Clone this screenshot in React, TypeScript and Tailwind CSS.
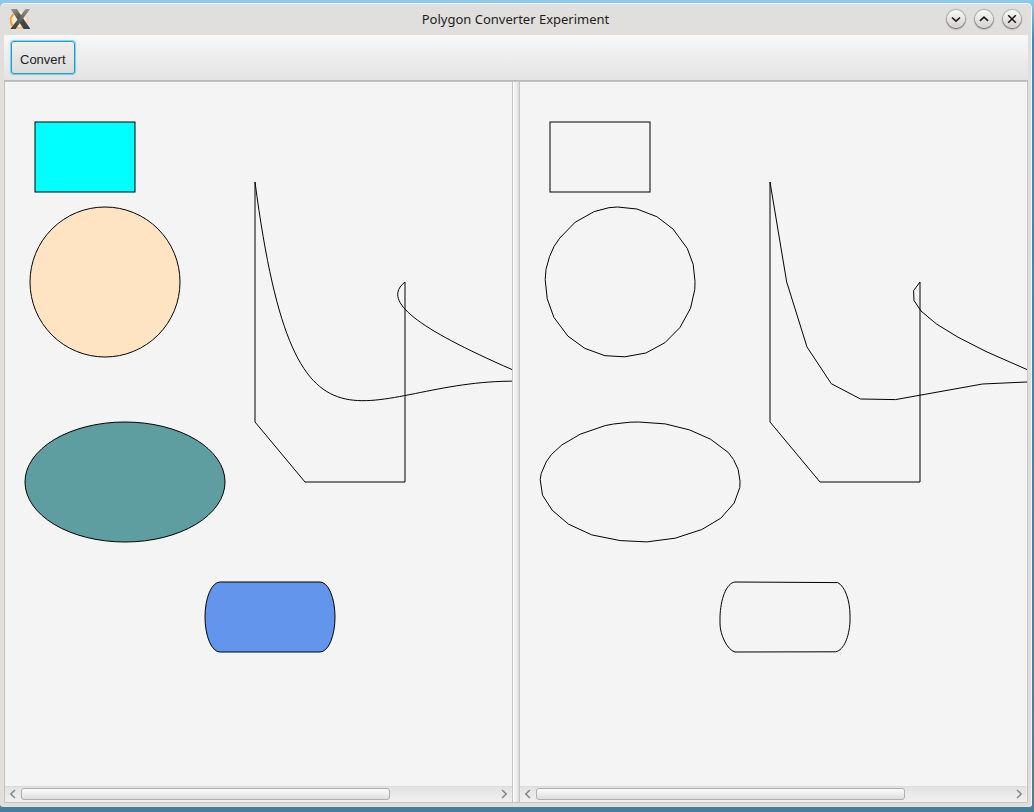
import type { ReactNode } from "react";

function AppLogo() {
  return (
    <svg width="22" height="24" viewBox="0 0 22 24" aria-hidden="true">
      <defs>
        <linearGradient id="logo-dark" x1="0" y1="0" x2="1" y2="1">
          <stop offset="0" stopColor="#a3a29f" />
          <stop offset="0.45" stopColor="#4c4b4a" />
          <stop offset="1" stopColor="#3c3b38" />
        </linearGradient>
        <linearGradient id="logo-light" x1="1" y1="0" x2="0" y2="1">
          <stop offset="0" stopColor="#9b9a96" />
          <stop offset="0.5" stopColor="#64635e" />
          <stop offset="1" stopColor="#3c3a1c" />
        </linearGradient>
      </defs>
      <ellipse cx="9" cy="13" rx="7.6" ry="7.6" fill="#fdeedb" stroke="#fbdcb4" strokeWidth="1.4" />
      <path d="M2.6 18.6 C-0.4 15 -0.2 10.5 3.4 7.2" fill="none" stroke="#f39a3e" strokeWidth="2" />
      <path d="M5 6 C7 4.6 10.5 4.6 12.5 5.4" fill="none" stroke="#fdebc4" strokeWidth="1.4" />
      <path d="M6.5 20.4 C9 21.6 12 21.2 14 20.2" fill="none" stroke="#f6bc66" strokeWidth="1.3" />
      <path d="M17 9.4 C18.2 12 17.8 15 16.8 17" fill="none" stroke="#f7cfa5" strokeWidth="1.1" />
      <path d="M0.6 2 L6.8 2 L20.4 22 L13.6 22 Z" fill="url(#logo-dark)" />
      <path d="M15.6 2 L20 2 L5.6 22 L0.4 22 Z" fill="url(#logo-light)" />
    </svg>
  );
}

function TitleButton({ label, children }: { label: string; children: ReactNode }) {
  return (
    <button
      type="button"
      aria-label={label}
      className="flex size-[18px] items-center justify-center rounded-full bg-linear-to-b from-[#fafafa] to-[#d3d1cf] shadow-[0_1px_2px_rgba(0,0,0,0.5),0_0_1px_1px_rgba(90,90,90,0.35)]"
    >
      <svg width="18" height="18" viewBox="0 0 18 18" fill="none" stroke="#1b1b1b" strokeWidth="1.6">
        {children}
      </svg>
    </button>
  );
}

function ScrollBar({ label }: { label: string }) {
  return (
    <div
      role="group"
      aria-label={label}
      className="flex h-4 shrink-0 items-center border-t border-[#dcdcdc] bg-linear-to-b from-[#e3e3e3] to-[#f0f0f0] pb-0.5"
    >
      <button type="button" aria-label="Scroll left" className="flex w-4 shrink-0 justify-center">
        <svg width="8" height="10" viewBox="0 0 8 10" fill="none" stroke="#858585" strokeWidth="1.5">
          <path d="M6 1 L1.8 5 L6 9" />
        </svg>
      </button>
      <div className="min-w-0 flex-1">
        <div className="h-3 w-[77.7%] rounded-[3px] border border-[#aeaeae] bg-linear-to-b from-[#fdfdfd] to-[#dedede]" />
      </div>
      <button type="button" aria-label="Scroll right" className="flex w-4 shrink-0 justify-center">
        <svg width="8" height="10" viewBox="0 0 8 10" fill="none" stroke="#858585" strokeWidth="1.5">
          <path d="M2 1 L6.2 5 L2 9" />
        </svg>
      </button>
    </div>
  );
}

function Pane({ label, children }: { label: string; children: ReactNode }) {
  return (
    <section aria-label={label} className="flex min-w-0 flex-1 flex-col bg-[#f4f4f4]">
      <div className="min-h-0 flex-1 overflow-hidden">
        <svg width="654" height="700" viewBox="0 0 654 700" fill="none" stroke="#000" strokeWidth="1">
          {children}
        </svg>
      </div>
      <ScrollBar label={`${label} scroll bar`} />
    </section>
  );
}

function SourceShapes() {
  return (
    <>
      <rect x="30" y="40" width="100" height="70" fill="#00ffff" />
      <circle cx="100" cy="200" r="75" fill="#ffe4c4" />
      <ellipse cx="120" cy="400" rx="100" ry="60" fill="#5f9ea0" />
      <rect x="200" y="500" width="130" height="70" rx="15" ry="35" fill="#6495ed" />
      <path d="M250 100 C292 419 359 293 520 299.4" />
      <path d="M400 200 C373 221 420 253 557 308.5" />
      <path d="M250 100 V340 L300 400 H400 V200" />
    </>
  );
}

function ConvertedShapes() {
  return (
    <>
      <rect x="30" y="40" width="100" height="70" />
      <polygon points="97.5,125 116.9,127 136.9,134.7 153,147 167.3,166.5 173.2,182.4 175,199.4 174.8,207.4 170.5,226.4 159.8,245.7 144.9,260.7 125.9,271 104.9,274.8 84.9,273.7 64.9,266.4 47.9,254.1 33.9,235.4 27.2,216.7 25.2,197.7 26,187.4 29.5,174.7 34,164.5 39.8,156 55.2,140.2 74.2,129.6 88.9,125.7" />
      <polygon points="110,340.2 118.5,340 145.2,341.9 169.5,347.9 190.5,357.2 208.4,370.6 213.5,377.5 218.2,387.5 220,399.2 219.8,405.5 214.2,421 200.8,436.2 181.8,447.5 155.2,456.2 126.8,459.9 100.2,458.6 71.8,452.9 48.5,442.2 32.2,428.2 22.5,413.2 20.2,397.6 21.2,391.5 26.2,379.9 31.5,372.4 41.8,363 60.2,352.2 85.2,343.6 93.5,342" />
      <path d="M215 500 L317.7 500.6 C325 504 330 519 330 533 V540 C329 555 324 568 315.7 569.8 L215 570 C207 568 200 552 200 542 V535 C200.5 518 206 501 215 500 Z" />
      <polyline points="250,100 266.7,200 287,265 311.3,301.7 340.5,317 375.5,317.6 462.5,302 520,299.4" />
      <polyline points="400,200 393.6,208.6 394,218.5 401,229 416.5,242 438,255.2 466,269.5 508,288" />
      <path d="M250 100 V340 L300 400 H400 V200" />
    </>
  );
}

export default function App() {
  return (
    <div className="flex h-screen bg-linear-to-b from-[#8fcbeb] from-0% via-[#348bb8] via-5% to-[#467f9d] pt-[3px] pr-0.5 pb-[5px]">
      <main className="flex min-w-0 flex-1 flex-col rounded-t-[5px] rounded-b-[3px] border-t border-r border-[#f5f5f5] bg-[#e0dfdd]">
        <header className="flex h-[31px] shrink-0 items-center justify-between px-2.5 pb-0.5">
          <div className="flex flex-1">
            <AppLogo />
          </div>
          <h1 className="font-['Noto_Sans',sans-serif] text-[13px] leading-5 text-[#1d1d1d]">
            Polygon Converter Experiment
          </h1>
          <div className="flex flex-1 justify-end gap-2.5">
            <TitleButton label="Minimize">
              <path d="M5 7.5 L9 11.2 L13 7.5" />
            </TitleButton>
            <TitleButton label="Maximize">
              <path d="M5 10.8 L9 7.1 L13 10.8" />
            </TitleButton>
            <TitleButton label="Close">
              <path d="M5.2 5.2 L12.8 12.8 M12.8 5.2 L5.2 12.8" />
            </TitleButton>
          </div>
        </header>
        <div className="mr-[3px] mb-1 ml-1 flex min-h-0 flex-1 flex-col bg-[#f4f4f4]">
          <div
            role="toolbar"
            aria-label="Actions"
            className="flex h-[46px] shrink-0 items-center border-b border-[#b8b8b8] bg-linear-to-b from-[#f8f8f8] to-[#e3e3e3] px-[7px]"
          >
            <button
              type="button"
              className="h-[33px] rounded-[3px] border border-[#1b9fcb] bg-linear-to-b from-[#f0f0f0] to-[#dbdbdb] px-2 pt-1 font-['Liberation_Sans',Arial,sans-serif] text-[13px] leading-5 text-[#222] shadow-[0_0_1px_1px_rgba(3,158,211,0.45)]"
            >
              Convert
            </button>
          </div>
          <div className="flex min-h-0 flex-1 border border-[#c4c4c4]">
            <Pane label="Source shapes">
              <SourceShapes />
            </Pane>
            <div
              role="separator"
              aria-orientation="vertical"
              className="w-2 shrink-0 border-x border-[#c4c4c4] bg-linear-to-r from-white to-[#dcdcdc]"
            />
            <Pane label="Converted polygons">
              <ConvertedShapes />
            </Pane>
          </div>
        </div>
      </main>
    </div>
  );
}
